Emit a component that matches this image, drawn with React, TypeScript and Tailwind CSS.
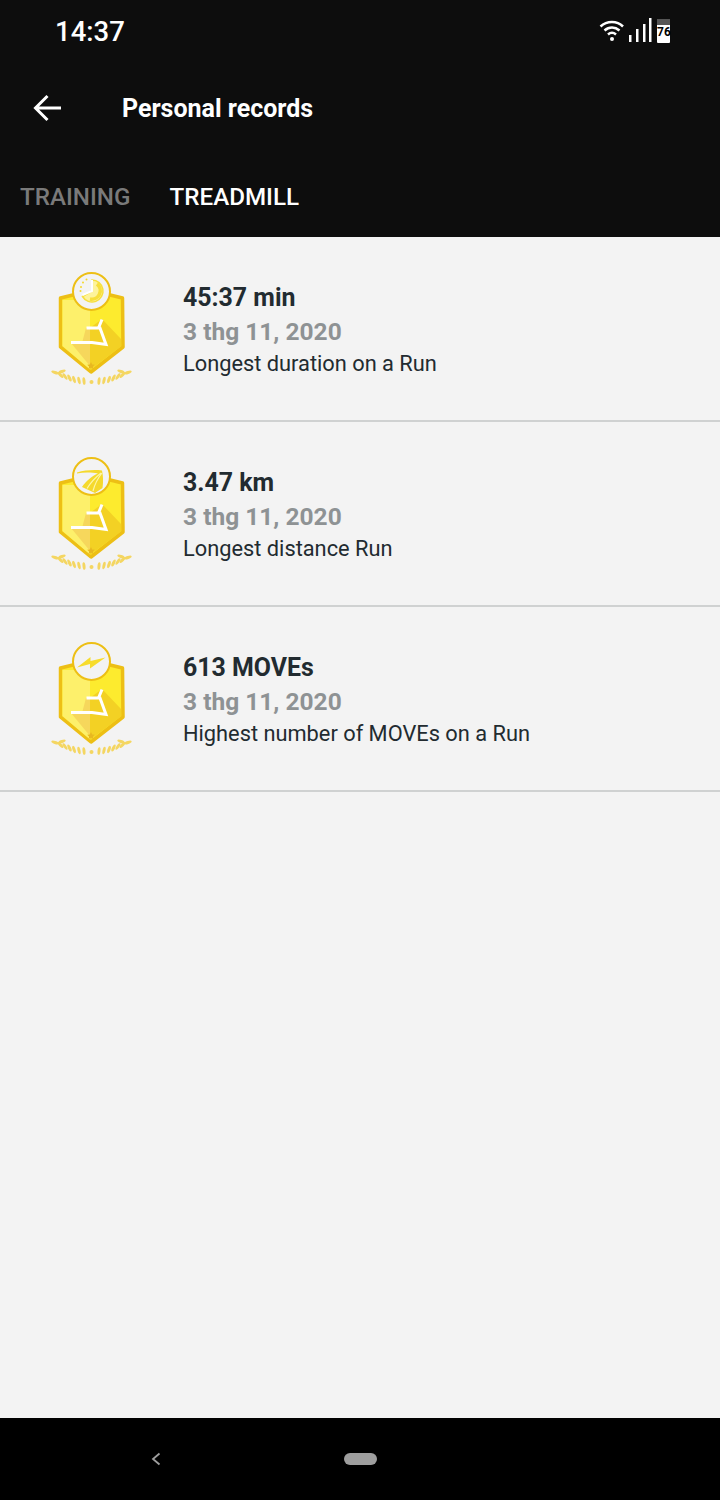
import { ReactNode } from "react";

const records = [
  { value: "45:37 min", date: "3 thg 11, 2020", label: "Longest duration on a Run", kind: "time" },
  { value: "3.47 km", date: "3 thg 11, 2020", label: "Longest distance Run", kind: "road" },
  { value: "613 MOVEs", date: "3 thg 11, 2020", label: "Highest number of MOVEs on a Run", kind: "moves" },
];

const leaves = [
  [54, 121, -6],
  [49, 120.500, -12],
  [44, 119.500, -18],
  [39.500, 118, -26],
  [35, 116.500, -34],
  [30.500, 115, -44],
  [25, 112.500, -72],
  [32, 111.500, 72],
];

const Laurel = () => (
  <g fill="#f4d661">
    {leaves.map(([x, y, r]) => (
      <ellipse key={`${x}-${y}`} cx={x} cy={y} rx="1.500" ry="3.800" transform={`rotate(${r} ${x} ${y})`} />
    ))}
  </g>
);

const TopIcon = ({ kind }: { kind: string }) => {
  if (kind === "time") {
    return (
      <g>
        <path d="M62 20A11 11 0 1 1 52.500 36.500L62 31Z" fill="#fdf39b" stroke="#f7df3c" strokeWidth="1.500" />
        <path d="M67 24A8.500 8.500 0 0 1 60 39" fill="none" stroke="#f7df3c" strokeWidth="3.500" />
        <path d="M62 20V31L52.500 35" fill="none" stroke="#fff" strokeWidth="2" />
        <circle cx="53" cy="22.500" r="1" fill="#f5d92c" />
        <circle cx="50.500" cy="31" r="1" fill="#f5d92c" />
        <circle cx="51" cy="27" r="1" fill="#f5d92c" />
        <circle cx="56.500" cy="19.500" r="1" fill="#f5d92c" />
      </g>
    );
  }
  if (kind === "road") {
    return (
      <g>
        <path d="M47 27.500C55 25 65 24.500 72 25.500C73 30 73.500 36 72.500 43L65 48L52 42C56 36 62 31 68 28.500C62 27.300 54 27 47 28.500Z" fill="#f5d92c" />
        <path d="M57 43.500C61 37 66 32 71 28M63 46C65 38 68 33 72 28" fill="none" stroke="#fdf6a8" strokeWidth="1.200" />
      </g>
    );
  }
  return <path d="M47 37.500L60.500 27L60.500 31L75.500 27.500L60 38.500L60 34Z" fill="#f7dc2c" />;
};

const Badge = ({ kind }: { kind: string }) => (
  <svg width="120" height="135" viewBox="0 0 120 135" className="block">
    <path d="M30.500 38L47 34L61 40L76 34L92.500 38L93 87L61 112L30.500 87Z" fill="#fdeb2e" stroke="#edbf15" strokeWidth="3.500" strokeLinejoin="round" />
    <path d="M32.500 40L60 40L60 109.500L32.500 86Z" fill="#fdf06b" />
    <path d="M41 83L60 83L60 106Z" fill="#f6d75c" />
    <path d="M56 68L60 68L60 83L52 83Z" fill="#f6d75c" />
    <path d="M60 68L72 59L91 79L91 86.500L60 110Z" fill="#f3d124" />
    <path d="M41 82.500H62L76 84.500L70 68H56.500" fill="none" stroke="#fff" strokeWidth="3" />
    <path d="M68.500 68L72 59.500" fill="none" stroke="#fff" strokeWidth="3" />
    <path d="M61 102l1.200 2.400 2.600.300-1.900 1.800.500 2.600-2.400-1.300-2.400 1.300.500-2.600-1.900-1.800 2.600-.300z" fill="#e8b820" />
    <circle cx="61.500" cy="31.500" r="18.500" fill="#f3f3f3" stroke="#edbf15" strokeWidth="2" />
    <TopIcon kind={kind} />
    <Laurel />
    <g transform="matrix(-1 0 0 1 123 0)">
      <Laurel />
    </g>
    <circle cx="61.500" cy="122" r="2" fill="#f4d661" />
  </svg>
);

const RecordRow = ({ children, value, date, label }: { children: ReactNode; value: string; date: string; label: string }) => (
  <div className="flex h-[185px] items-center border-b-2 border-[#cfd1d1] pl-[30px]">
    <div className="w-[153px] shrink-0 pb-[2px]">{children}</div>
    <div className="flex flex-col pt-[3px]">
      <div className="text-[24.900px] leading-[33px] font-bold text-[#222b30]">{value}</div>
      <div className="text-[24.500px] leading-[35px] font-bold text-[#8e9294]">{date}</div>
      <div className="text-[21.800px] leading-[30px] text-[#222b30]">{label}</div>
    </div>
  </div>
);

const StatusIcons = () => (
  <svg width="58" height="26" viewBox="0 0 58 26" fill="none">
    <path d="M1.500 8.500C8 2.500 18 2.500 24 8.500" stroke="#fff" strokeWidth="2.500" />
    <path d="M5.500 12.500C10 8.500 16 8.500 20.500 12.500" stroke="#fff" strokeWidth="2.500" />
    <path d="M9 16.500C11.500 14.300 14.500 14.300 17 16.500" stroke="#fff" strokeWidth="2.500" />
    <circle cx="13" cy="21" r="2" fill="#fff" />
    <rect x="30" y="17" width="2.500" height="7" fill="#fff" />
    <rect x="37" y="11" width="2.500" height="13" fill="#fff" />
    <rect x="44" y="6" width="2.500" height="18" fill="#fff" />
    <rect x="50" y="0" width="2.500" height="24" fill="#fff" />
  </svg>
);

export default function App() {
  return (
    <div className="flex h-[1500px] w-[720px] flex-col bg-[#f3f3f3] font-['Roboto',sans-serif]">
      <header className="h-[237px] shrink-0 bg-[#0d0d0d] text-white">
        <div className="flex h-[62px] items-center justify-between pl-[55px] pr-[50px]">
          <span className="pt-[1px] text-[27.500px] font-medium">14:37</span>
          <div className="flex items-center">
            <StatusIcons />
            <div className="relative h-[24px] w-[13px] rounded-[1px] bg-white text-center text-[12px] leading-[26px] font-bold text-black">
              <span className="absolute inset-x-0 top-0 h-[6px] bg-[#555]"></span>
              <span className="relative">76</span>
            </div>
          </div>
        </div>
        <div className="flex h-[92px] items-center">
          <svg width="30" height="28" viewBox="0 0 30 28" fill="none" className="ml-[33px]">
            <path d="M28 14H3M14.500 2L2.500 14l12 12" stroke="#fff" strokeWidth="3" />
          </svg>
          <h1 className="ml-[59px] pt-[1px] text-[25px] font-bold">Personal records</h1>
        </div>
        <div className="flex pl-[20px] pt-[25px] text-[24.200px] font-medium">
          <span className="text-[#7a7a7a]">TRAINING</span>
          <span className="ml-[39px] text-white">TREADMILL</span>
        </div>
      </header>
      <main className="flex-1">
        {records.map((r) => (
          <RecordRow key={r.value} value={r.value} date={r.date} label={r.label}>
            <Badge kind={r.kind} />
          </RecordRow>
        ))}
      </main>
      <footer className="flex h-[82px] shrink-0 items-center bg-black">
        <svg width="10" height="14" viewBox="0 0 10 14" fill="none" className="ml-[151px]">
          <path d="M8.500 1.500L2 7l6.500 5.500" stroke="#9e9e9e" strokeWidth="1.800" />
        </svg>
        <div className="ml-[183px] h-[12px] w-[33px] rounded-full bg-[#9e9e9e]"></div>
      </footer>
    </div>
  );
}
